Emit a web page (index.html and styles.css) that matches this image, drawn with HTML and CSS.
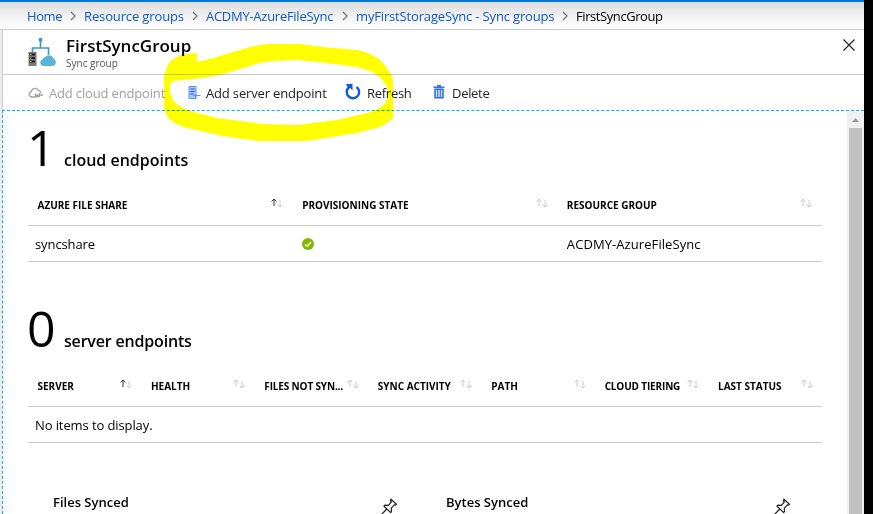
FILE: index.html
```html
<!DOCTYPE html>
<html lang="en">
<head>
<meta charset="utf-8">
<title>FirstSyncGroup</title>
<link rel="stylesheet" href="styles.css">
</head>
<body>
<svg class="defs" width="0" height="0" aria-hidden="true">
  <symbol id="sort" viewBox="0 0 12 10"><path class="down" d="M9 2v7M6.600 6.600 9 9l2.400-2.400"/></symbol>
  <symbol id="chev" viewBox="0 0 6 10"><path d="M1 1l4 4-4 4" fill="none" stroke="#777" stroke-width="1.300"/></symbol>
  <symbol id="pin" viewBox="0 0 18 18"><path d="M11 1.200l5.500 5-1 1-1.200-.3-3 3.300.2 3.500-1 .8-6.500-6.300.9-1 3.600.2 2.800-3.500-.9-1.200zM6.800 11 1 17" fill="#fff" stroke="#222" stroke-width="1.200"/></symbol>
</svg>
<div class="window">
  <nav class="crumbs">
    <a class="c1">Home</a><svg class="chev"><use href="#chev"/></svg>
    <a class="c2">Resource groups</a><svg class="chev"><use href="#chev"/></svg>
    <a class="c3">ACDMY-AzureFileSync</a><svg class="chev"><use href="#chev"/></svg>
    <a class="c4">myFirstStorageSync - Sync groups</a><svg class="chev"><use href="#chev"/></svg>
    <span class="c5">FirstSyncGroup</span>
  </nav>
  <header class="blade-head">
    <svg class="logo" viewBox="0 0 28 30">
      <path d="M12.500 3v8M4.500 15v-4h16v7" fill="none" stroke="#3999c6" stroke-width="1.600"/><circle cx="12.500" cy="2.800" r="2" fill="#3999c6"/>
      <path d="M.5 15h8v14h-8z" fill="#7a7a7a"/><path d="M1.500 16.500h5.500v2H1.500zm0 3.500h5.500v2H1.500zm0 3.500h5.500v2H1.500z" fill="#222"/><path d="M2 17h1.500v1H2zm0 3.500h1.500v1H2zM2 24h1.500v1H2z" fill="#b8d432"/>
      <path d="M15.500 29a3.500 3.500 0 0 1-.8-6.800 4 4 0 0 1 2.800-2.500 5 5 0 0 1 8.200 2.300A3.700 3.700 0 0 1 25 29z" fill="#59b4d9"/>
    </svg>
    <div class="titles"><h1>FirstSyncGroup</h1><p>Sync group</p></div>
    <svg class="close" viewBox="0 0 12 12"><path d="M.5.5l11 11M11.500.5l-11 11" stroke="#222" stroke-width="1.200"/></svg>
  </header>
  <div class="toolbar">
    <div class="tool t1 off"><svg viewBox="0 0 16 12"><path d="M8 10H3.500a2.700 2.700 0 0 1-.2-5.300A3.800 3.800 0 0 1 10.500 3.500 3 3 0 0 1 13 6M7 8h8M11.500 6v3.500H7.500V6.500" fill="none" stroke="#a5a5a5" stroke-width="1.300"/></svg><span>Add cloud endpoint</span></div>
    <div class="tool t2"><svg viewBox="0 0 13 14"><path d="M1 .5h7v12H1z" fill="#a9c9f5" stroke="#5b93e8"/><path d="M2.500 3h4M2.500 5.500h4M2.500 8h3" stroke="#155ad0" stroke-width="1.200"/><path d="M5 9.500h7.500M7.500 8v3.500" stroke="#5b93e8" stroke-width="1.200"/></svg><span>Add server endpoint</span></div>
    <div class="tool t3"><svg viewBox="0 0 16 16"><path d="M11.500 3A6.200 6.200 0 1 1 4 3.300" fill="none" stroke="#0b5cd6" stroke-width="2.400"/><path d="M1 0h6.500v6.500L5.600 4.300 3 4z" fill="#0b5cd6"/></svg><span>Refresh</span></div>
    <div class="tool t4"><svg viewBox="0 0 12 14"><path d="M.5 2.300h11M4 .8h4" stroke="#3676dc" stroke-width="1.400"/><path d="M2 4.300h8v8.500H2z" fill="#c5dafa" stroke="#2c6fd9" stroke-width="1.500"/><path d="M4.700 5v7M7.300 5v7" stroke="#2c6fd9"/></svg><span>Delete</span></div>
  </div>
  <div class="body">
    <main class="content">
      <section class="cloud">
        <h2><span class="num">1</span><span class="label l1">cloud endpoints</span></h2>
        <div class="grid three head">
          <div><span class="h1a">AZURE FILE SHARE</span><svg class="sort asc"><path d="M3 8V1M.6 3.400 3 1l2.400 2.400"/><use href="#sort"/></svg></div>
          <div><span class="h1b">PROVISIONING STATE</span><svg class="sort"><path d="M3 8V1M.6 3.400 3 1l2.400 2.400"/><use href="#sort"/></svg></div>
          <div><span class="h1c">RESOURCE GROUP</span><svg class="sort"><path d="M3 8V1M.6 3.400 3 1l2.400 2.400"/><use href="#sort"/></svg></div>
        </div>
        <div class="grid three row">
          <div><span class="r1">syncshare</span></div>
          <div><svg class="ok" viewBox="0 0 12 12"><circle cx="6" cy="6" r="6" fill="#7fba00"/><path d="M3 6.200l2.200 2.100L9 4" fill="none" stroke="#fff" stroke-width="1.400"/></svg></div>
          <div><span class="r2">ACDMY-AzureFileSync</span></div>
        </div>
      </section>
      <section class="server">
        <h2><span class="num">0</span><span class="label l2">server endpoints</span></h2>
        <div class="grid seven head">
          <div><span class="s1">SERVER</span><svg class="sort asc"><path d="M3 8V1M.6 3.400 3 1l2.400 2.400"/><use href="#sort"/></svg></div>
          <div><span class="s2">HEALTH</span><svg class="sort"><path d="M3 8V1M.6 3.400 3 1l2.400 2.400"/><use href="#sort"/></svg></div>
          <div><span class="s3">FILES NOT SYN...</span><svg class="sort"><path d="M3 8V1M.6 3.400 3 1l2.400 2.400"/><use href="#sort"/></svg></div>
          <div><span class="s4">SYNC ACTIVITY</span><svg class="sort"><path d="M3 8V1M.6 3.400 3 1l2.400 2.400"/><use href="#sort"/></svg></div>
          <div><span class="s5">PATH</span><svg class="sort"><path d="M3 8V1M.6 3.400 3 1l2.400 2.400"/><use href="#sort"/></svg></div>
          <div><span class="s6">CLOUD TIERING</span><svg class="sort"><path d="M3 8V1M.6 3.400 3 1l2.400 2.400"/><use href="#sort"/></svg></div>
          <div><span class="s7">LAST STATUS</span><svg class="sort"><path d="M3 8V1M.6 3.400 3 1l2.400 2.400"/><use href="#sort"/></svg></div>
        </div>
        <div class="row empty"><span class="r3">No items to display.</span></div>
      </section>
      <section class="charts">
        <div class="chart"><h3 class="k1">Files Synced</h3><svg class="pin"><use href="#pin"/></svg></div>
        <div class="chart"><h3 class="k2">Bytes Synced</h3><svg class="pin"><use href="#pin"/></svg></div>
      </section>
    </main>
    <div class="scroll"><svg viewBox="0 0 7 4"><path d="M0 4 3.500 0 7 4z" fill="#999"/></svg><div class="thumb"></div></div>
  </div>
  <svg class="marker" viewBox="0 0 873 514"><path fill-rule="evenodd" d="M164 75L167 67Q169 61 175 58Q181 54 187 54L197 52.700V62L213 58 240 50Q255 45 270 44H300L323 47 357 50Q372 53 380 60Q385 64 388 70Q393 75 393 82V118Q388 123 380 127L357 133 307 141H257L223 136 187 128Q175 124 170 120Q165 115 164 107ZM173 81L203 78 223 74 250 66Q265 61 273 61L297 60 323 62.500 357 67Q370 70 377 75Q385 81 388 90V97Q386 103 383 105Q376 111 367 113L337 120 297 125 263 124 217 118 187 110Q178 106 173 100L170 92V84Z" fill="#ff0"/></svg>
</div>
</body>
</html>
```
FILE: styles.css
```css
* { box-sizing: border-box; }
body { margin: 0; width: 873px; height: 514px; overflow: hidden; background: #000; font: 13px "Open Sans", "Noto Sans", sans-serif; color: #111; }
h1, h2, h3, p { margin: 0; font-weight: 600; }
.defs { display: none; }
span, a, h1, p, h3 { white-space: nowrap; }
.window { position: relative; width: 864px; height: 514px; background: linear-gradient(90deg, #ececec 2px, #fff 2px); border-top: 2px solid #0078d7; display: flex; flex-direction: column; }
.crumbs { height: 28px; padding-left: 27px; display: flex; align-items: center; border-bottom: 1px solid #ccc; background: linear-gradient(#ddd, #fafafa 75%, #fff); }
.crumbs a { color: #1059c9; }
.c1 { width: 35px; letter-spacing: -.4px; }
.c2 { width: 100px; letter-spacing: -.13px; }
.c3 { width: 128px; letter-spacing: -.27px; }
.c4 { width: 198px; letter-spacing: -.16px; }
.c5 { letter-spacing: -.42px; color: #000; }
.chev { width: 6px; height: 10px; margin: 0 8px; }
.blade-head { height: 45px; margin-left: 2px; border-left: 1px solid #ccc; border-bottom: 1px solid #ccc; display: flex; padding: 7px 9px 0 25px; }
.logo { width: 28px; height: 30px; }
.titles { flex: 1; margin-left: 10px; }
h1 { font-size: 17px; line-height: 18px; color: #000; }
.titles p { font-size: 10px; line-height: 16px; font-weight: 400; color: #555; }
.close { width: 12px; height: 12px; margin-top: 2px; }
.toolbar { height: 35px; margin-left: 2px; border-left: 1px solid #ccc; padding-left: 25px; display: flex; align-items: center; color: #222; }
.tool { display: flex; align-items: center; letter-spacing: -.16px; }
.tool svg { flex: none; }
.off { color: #a0a0a0; }
.t1 { width: 160px; } .t1 svg { width: 16px; height: 12px; margin-right: 5px; }
.t2 { width: 157px; } .t2 svg { width: 13px; height: 14px; margin-right: 5px; }
.t3 { width: 88px; letter-spacing: -.28px; } .t3 svg { width: 16px; height: 16px; margin-right: 6px; margin-top: -2px; }
.t4 { letter-spacing: -.3px; } .t4 svg { width: 12px; height: 14px; margin-right: 7px; margin-top: -2px; }
.body { flex: 1; min-height: 0; margin-left: 2px; display: flex; border-top: 1px dashed #00b4f0; border-left: 1px dashed #00b4f0; }
.content { flex: 1; padding: 0 25px; overflow: hidden; }
.scroll { width: 17px; background: #f0f0f0; padding: 7px 2px 0; display: flex; flex-direction: column; align-items: center; }
.scroll svg { width: 7px; height: 4px; }
.thumb { flex: 1; width: 13px; margin-top: 6px; background: #c1c1c1; }
h2 { height: 74px; display: flex; align-items: baseline; color: #000; line-height: 72px; }
.server h2 { margin-top: 30px; }
.server { padding-top: 3px; margin-top: -3px; }
.num { width: 36px; font-size: 50px; font-weight: 400; margin-left: -1px; }
.label { font-size: 16px; margin-left: 1px; }
.l2 { letter-spacing: -.18px; }
.grid { display: grid; }
.three { grid-template-columns: repeat(3, 1fr); }
.seven { grid-template-columns: repeat(7, 1fr); }
.head { height: 41px; border-bottom: 1px solid #ccc; font-size: 10px; font-weight: 700; color: #000; }
.head > div { display: flex; align-items: flex-start; justify-content: space-between; padding: 13px 9.500px 0 9.500px; line-height: 14px; }
.s3, .s6 { letter-spacing: -.15px; }
.sort { flex: none; width: 12px; height: 10px; fill: none; stroke: #ccc; }
.asc > path { stroke: #333; }
.row { height: 36px; border-bottom: 1px solid #ccc; align-items: center; color: #000; }
.row > div { padding-left: 9.500px; }
.row > div:first-child { padding-left: 7px; }
.r1, .r3 { letter-spacing: -.1px; }
.r2 { letter-spacing: .08px; }
.ok { width: 12px; height: 12px; display: block; }
.empty { display: flex; padding-left: 7px; }
.charts { display: flex; padding: 50px 0 0 25px; }
.chart { flex: none; width: 393px; display: flex; }
h3 { font-size: 13px; line-height: 18px; width: 327px; color: #000; }
.pin { flex: none; width: 18px; height: 18px; margin-top: 5px; }
.marker { position: absolute; left: 0; top: -2px; width: 873px; height: 514px; mix-blend-mode: multiply; }
```
